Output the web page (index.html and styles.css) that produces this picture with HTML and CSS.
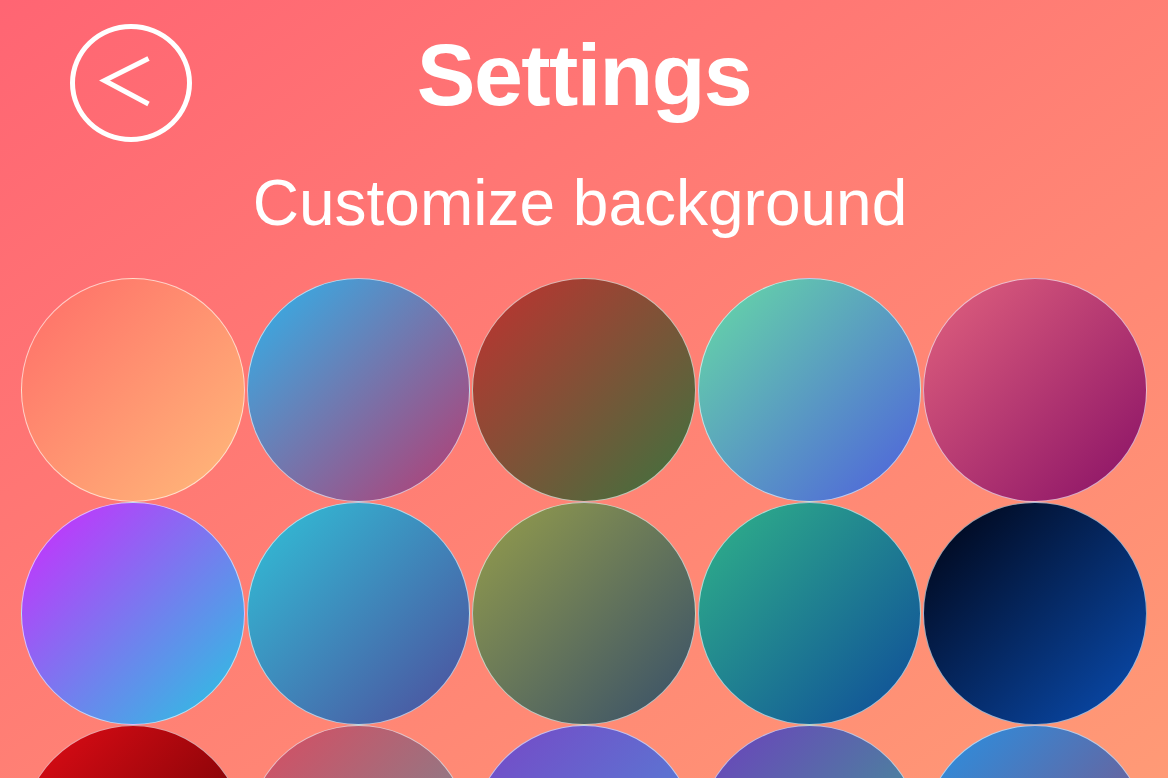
FILE: index.html
```html
<!DOCTYPE html>
<html lang="en">
<head>
<meta charset="utf-8">
<title>Settings</title>
<link rel="stylesheet" href="styles.css">
</head>
<body>
<main class="page">
  <header class="header">
    <button class="back" aria-label="Back">
      <svg class="back-icon" viewBox="0 0 112 108" aria-hidden="true">
        <polyline points="73.5,29.5 29.5,51.5 73.5,75" fill="none" stroke="#fff" stroke-width="5" stroke-linejoin="miter" stroke-miterlimit="4"/>
      </svg>
    </button>
    <h1 class="title">Settings</h1>
  </header>
  <p class="subtitle">Customize background</p>
  <section class="swatches">
    <div class="swatch s1"></div>
    <div class="swatch s2"></div>
    <div class="swatch s3"></div>
    <div class="swatch s4"></div>
    <div class="swatch s5"></div>
    <div class="swatch s6"></div>
    <div class="swatch s7"></div>
    <div class="swatch s8"></div>
    <div class="swatch s9"></div>
    <div class="swatch s10"></div>
    <div class="swatch s11"></div>
    <div class="swatch s12"></div>
    <div class="swatch s13"></div>
    <div class="swatch s14"></div>
    <div class="swatch s15"></div>
  </section>
</main>
</body>
</html>
```

FILE: styles.css
```css
html, body {
  margin: 0;
  padding: 0;
}

body {
  width: 1168px;
  height: 778px;
  overflow: hidden;
  background: linear-gradient(to bottom right, #ff6573, #ff9a76);
  font-family: "Liberation Sans", Arial, Helvetica, sans-serif;
  color: #fff;
}

.page {
  padding-top: 24px;
}

.header {
  display: grid;
  grid-template-columns: 1fr auto 1fr;
  align-items: start;
}

.back {
  grid-column: 1;
  justify-self: start;
  margin-left: 70px;
  width: 122px;
  height: 118px;
  padding: 0;
  border: 5px solid #fff;
  border-radius: 50%;
  background: transparent;
  box-sizing: border-box;
  display: block;
  cursor: pointer;
}

.back-icon {
  display: block;
  width: 100%;
  height: 100%;
}

.title {
  grid-column: 2;
  margin: 6.5px 0 0;
  font-size: 88px;
  line-height: 88px;
  font-weight: 700;
  letter-spacing: -1.6px;
  text-align: center;
}

.subtitle {
  margin: 29px 0 0;
  font-size: 64px;
  line-height: 64px;
  font-weight: 400;
  text-align: center;
  padding-right: 8px;
}

.swatches {
  margin-top: 43px;
  padding: 0 20px;
  display: grid;
  grid-template-columns: repeat(5, 1fr);
}

.swatch {
  aspect-ratio: 1 / 1;
  border-radius: 50%;
  border: 1px solid rgba(255, 255, 255, 0.62);
  box-sizing: border-box;
  margin: 0 1px;
}

.s1 { background: linear-gradient(to bottom right, #ff6c68, #ffbb7a); }
.s2 { background: linear-gradient(to bottom right, #2db4ec, #b83a70); }
.s3 { background: linear-gradient(to bottom right, #c2302f, #3b743f); }
.s4 { background: linear-gradient(to bottom right, #66dca4, #4e5ede); }
.s5 { background: linear-gradient(to bottom right, #e2627e, #881066); }

.s6 { background: linear-gradient(to bottom right, #d028ff, #24c8e0); }
.s7 { background: linear-gradient(to bottom right, #30c2d8, #4e4c9c); }
.s8 { background: linear-gradient(to bottom right, #969e4a, #364e6a); }
.s9 { background: linear-gradient(to bottom right, #30b488, #0e4a9a); }
.s10 { background: linear-gradient(to bottom right, #000210, #0a4eb4); }

.s11 { background: linear-gradient(to bottom right, #e40c16, #520000); }
.s12 { background: linear-gradient(to bottom right, #dc4a60, #64949a); }
.s13 { background: linear-gradient(to bottom right, #7846c6, #4894da); }
.s14 { background: linear-gradient(to bottom right, #6e3ebe, #36ac8a); }
.s15 { background: linear-gradient(to bottom right, #2692e4, #904874); }
```
